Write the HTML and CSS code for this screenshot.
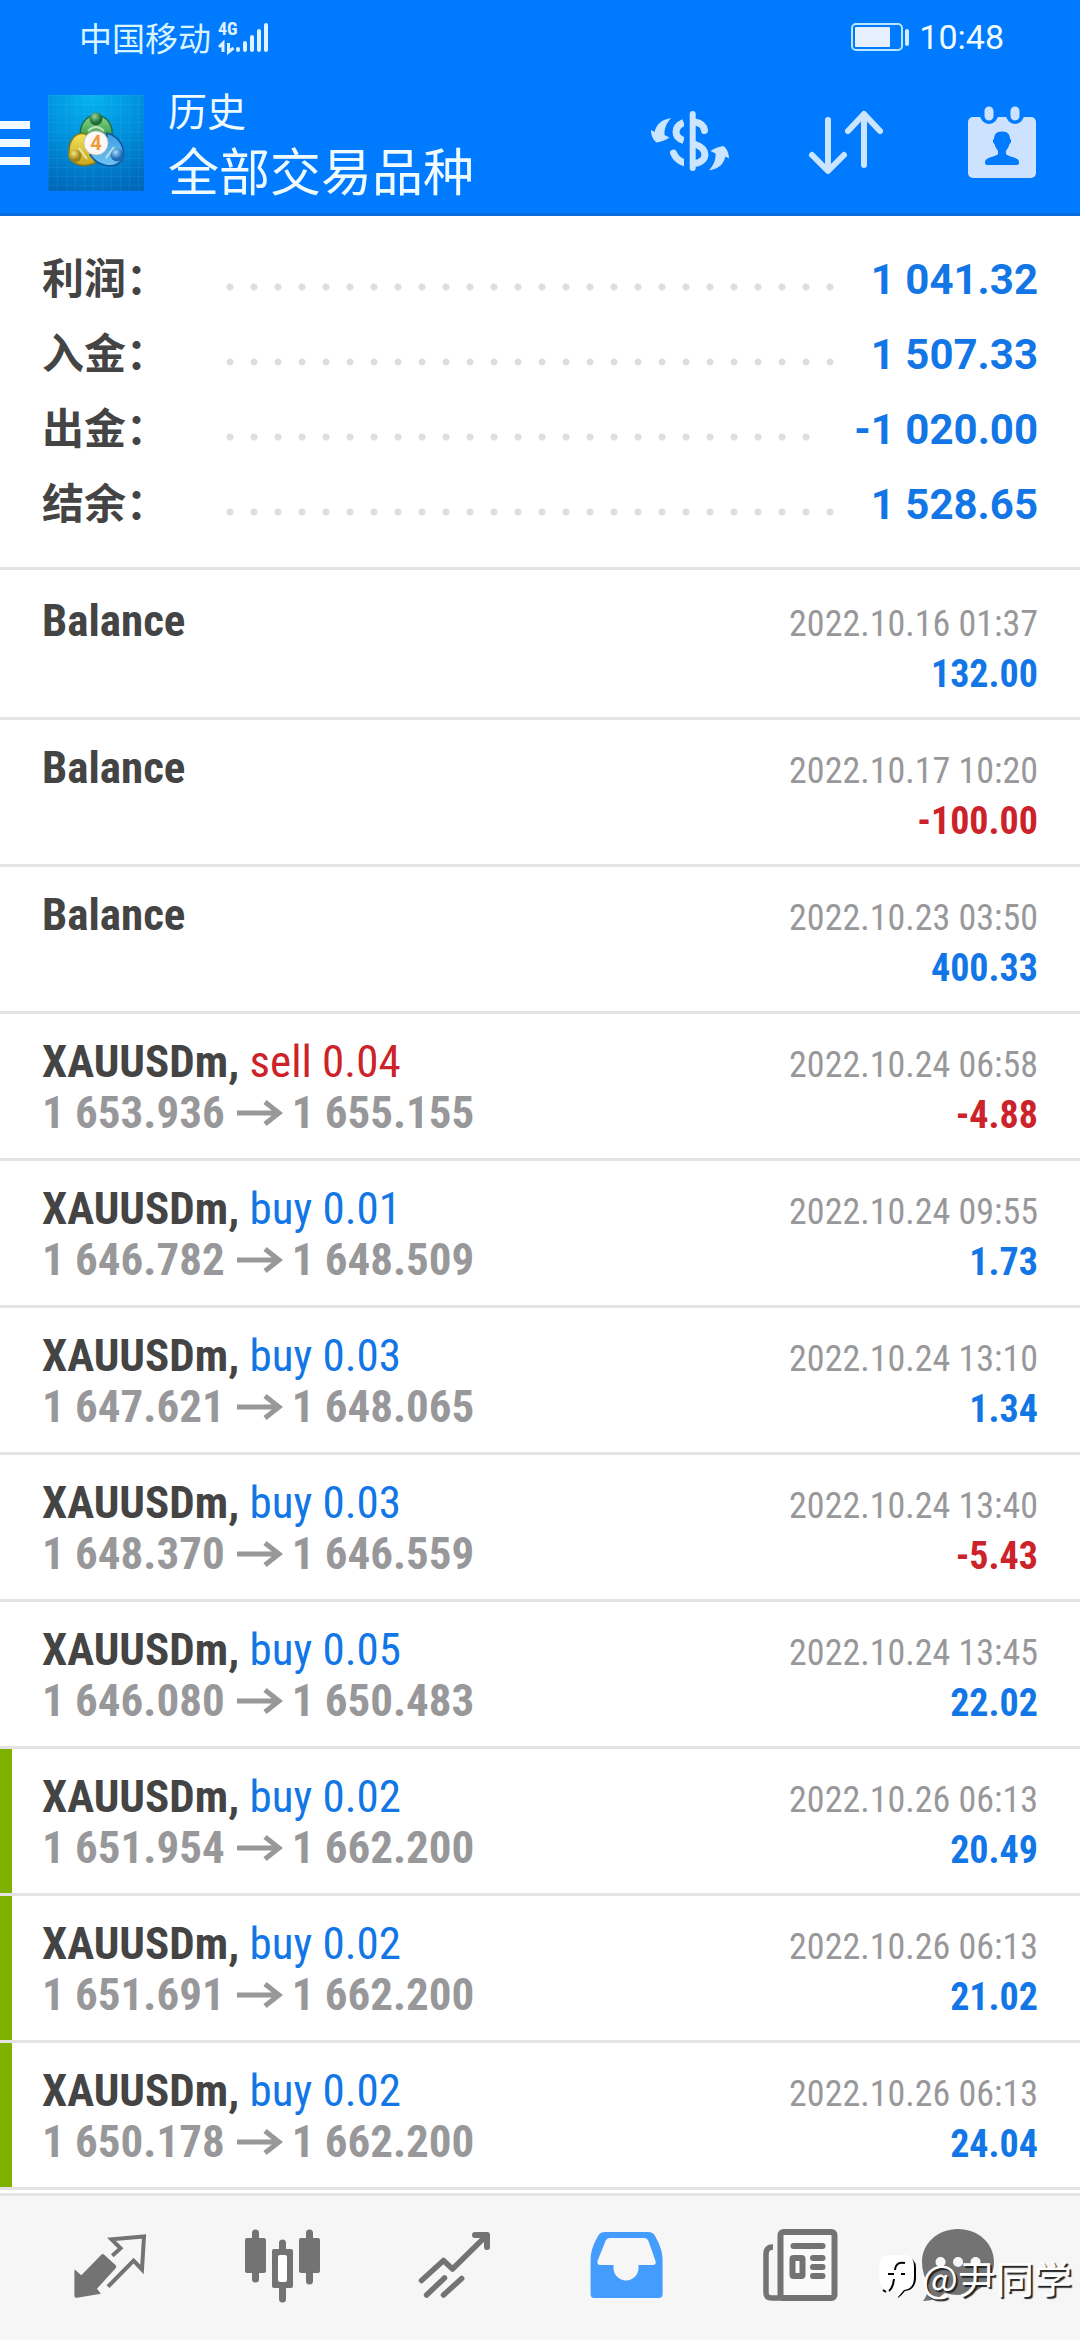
FILE: index.html
```html
<!DOCTYPE html>
<html lang="zh-CN">
<head>
<meta charset="utf-8">
<meta name="viewport" content="width=device-width, initial-scale=1">
<title>历史</title>
<link rel="stylesheet" href="styles.css">
</head>
<body>
<header class="header">
  <div class="status">
    <span class="carrier">中国移动</span>
    <svg class="signal" width="54" height="36" viewBox="0 0 54 36" aria-hidden="true">
      <text class="signal-type" x="1" y="16">4G</text>
      <path d="M2 28l4-4v9M11.500 24v9l5-4" fill="none" stroke="#e0f2ff" stroke-width="3"/>
      <path d="M21 30v1M28 24v7M35 18v13M42 12v19M49 6v25" stroke="#e0f2ff" stroke-width="4" stroke-linecap="round"/>
    </svg>
    <svg class="battery" width="60" height="28" viewBox="0 0 60 28" aria-hidden="true">
      <rect x="1" y="1" width="50" height="26" rx="4" fill="none" stroke="#b8e4ff" stroke-width="2"/>
      <rect x="4" y="4" width="35" height="20" rx="1" fill="#e6f0ff"/>
      <rect x="54" y="6" width="4" height="17" rx="2" fill="#d0eaff"/>
    </svg>
    <time class="clock">10:48</time>
  </div>
  <div class="toolbar">
    <button class="menu" type="button" aria-label="菜单"><span class="menu-line"></span><span class="menu-line"></span><span class="menu-line"></span></button>
    <svg class="logo" viewBox="0 0 96 96" aria-hidden="true">
      <defs>
        <radialGradient id="bg" cx=".45" cy="0" r="1.05"><stop offset="0" stop-color="#06b4f2"/><stop offset=".5" stop-color="#0090dc"/><stop offset="1" stop-color="#0067ba"/></radialGradient>
        <pattern id="grid" width="9" height="9" patternUnits="userSpaceOnUse"><path d="M0 0H9M0 0V9" stroke="#5cc4f4" stroke-opacity=".22"/></pattern>
        <linearGradient id="green" x2="0" y2="1"><stop offset="0" stop-color="#8fd98a"/><stop offset="1" stop-color="#1e8a3c"/></linearGradient>
        <linearGradient id="yellow" x2="0" y2="1"><stop offset="0" stop-color="#f0e45c"/><stop offset="1" stop-color="#c9a51c"/></linearGradient>
        <linearGradient id="blue" x2="0" y2="1"><stop offset="0" stop-color="#3c9fe0"/><stop offset="1" stop-color="#6fc2f4"/></linearGradient>
        <radialGradient id="gball" cx=".4" cy=".3"><stop offset="0" stop-color="#9ad49a"/><stop offset="1" stop-color="#1d6e36"/></radialGradient>
        <radialGradient id="yball" cx=".4" cy=".3"><stop offset="0" stop-color="#f4e87a"/><stop offset="1" stop-color="#9c8418"/></radialGradient>
        <radialGradient id="bball" cx=".4" cy=".3"><stop offset="0" stop-color="#a4dcff"/><stop offset="1" stop-color="#1c6cb4"/></radialGradient>
      </defs>
      <rect width="96" height="96" fill="url(#bg)"/>
      <rect width="96" height="96" fill="url(#grid)"/>
      <path d="M33 46C30 32 36 21 48 20C61 21 67 33 63 47Z" fill="url(#green)" stroke="#1a6f4c" stroke-width="1.500"/>
      <path d="M38 39C24 36 20 50 21 61C24 70 35 73 47 68L42 52Z" fill="url(#yellow)" stroke="#7e7a1c" stroke-width="1.500"/>
      <path d="M59 38C73 42 78 55 74 65C66 75 50 71 42 60L58 54Z" fill="url(#blue)" stroke="#11569c" stroke-width="1.500"/>
      <path d="M40 36q8-8 16 0M31 53l8 11M66 52l-8 11" fill="none" stroke="#eaf6dc" stroke-opacity=".7" stroke-width="2"/>
      <circle cx="48" cy="24" r="6.500" fill="url(#gball)"/>
      <circle cx="27" cy="61" r="6.500" fill="url(#yball)"/>
      <circle cx="69" cy="60" r="6.500" fill="url(#bball)"/>
      <circle cx="48" cy="48" r="12" fill="#fbf8f6" stroke="#c8c4c0"/>
      <text class="logo-digit" x="48" y="55" text-anchor="middle">4</text>
    </svg>
    <div class="titles">
      <div class="subtitle">历史</div>
      <h1 class="title">全部交易品种</h1>
    </div>
    <button class="tool" type="button" aria-label="交易品种">
      <svg width="156" height="144" viewBox="0 0 156 144" aria-hidden="true">
        <g fill="none" stroke="#cce5ff" stroke-width="7">
          <path d="M71.700 51.500C61.500 56 61.500 66 71.700 69.500"/>
          <path d="M61.500 82C63.500 87 67 90 71.700 91.500M83 51C89 52 92 55 92.500 59.500" stroke-linecap="round"/>
          <path d="M82 73C96.500 77 96.500 91 82 92.500"/>
        </g>
        <path d="M72 42h4v60h-4z" fill="#007aff"/>
        <path d="M80.700 43V97" stroke="#cce5ff" stroke-width="6" stroke-linecap="round"/>
        <path id="swap" d="M59 47C48 49 44.500 54 42.500 61L39 59C39 64 41 69 44.700 71.500C49 71 54 69 57.500 66.500L52.500 64C52 58 54.500 52 59 47Z" fill="#cce5ff"/>
        <use href="#swap" transform="rotate(180 78 73.300)"/>
      </svg>
    </button>
    <button class="tool" type="button" aria-label="排序">
      <svg width="156" height="144" viewBox="0 0 156 144" aria-hidden="true">
        <path d="M60 49V98M44 84L60 100L76 84M96 94V45M80 60L96 43L112 60" fill="none" stroke="#cce5ff" stroke-width="6" stroke-linecap="round" stroke-linejoin="round"/>
      </svg>
    </button>
    <button class="tool" type="button" aria-label="日期">
      <svg width="156" height="144" viewBox="0 0 156 144" aria-hidden="true">
        <rect x="44" y="46" width="68" height="61" rx="5" fill="#cce2ff"/>
        <path d="M65 40V44M91 40V44" stroke="#007aff" stroke-width="18" stroke-linecap="round"/>
        <path d="M65 40V45M91 40V45" stroke="#cce2ff" stroke-width="9" stroke-linecap="round"/>
        <path d="M78 60.500C84 60.500 86 64 86 68C88 69 87 72 85.500 73C85 76 83 78 82 80V83C84 86 95 86 95 91V92Q95 94 93 94H63Q61 94 61 92V91C61 86 72 86 74 83V80C73 78 71 76 70.500 73C69 72 68 69 70 68C70 64 72 60.500 78 60.500Z" fill="#007aff"/>
      </svg>
    </button>
  </div>
</header>

<main class="main">
  <dl class="summary">
    <div class="sum-row"><dt class="sum-label">利润：</dt><dd class="sum-value">1 041.32</dd></div>
    <div class="sum-row"><dt class="sum-label">入金：</dt><dd class="sum-value">1 507.33</dd></div>
    <div class="sum-row"><dt class="sum-label">出金：</dt><dd class="sum-value">-1 020.00</dd></div>
    <div class="sum-row"><dt class="sum-label">结余：</dt><dd class="sum-value">1 528.65</dd></div>
  </dl>

  <svg class="defs" width="0" height="0" aria-hidden="true"><symbol id="arrow" viewBox="0 0 46 26"><path d="M0 13H42M28 2L42 13L28 24" fill="none" stroke="#98989b" stroke-width="5"/></symbol></svg>

  <ul class="deals">
    <li class="deal"><span class="name">Balance</span><time class="date">2022.10.16 01:37</time><span class="profit">132.00</span></li>
    <li class="deal"><span class="name">Balance</span><time class="date">2022.10.17 10:20</time><span class="profit loss">-100.00</span></li>
    <li class="deal"><span class="name">Balance</span><time class="date">2022.10.23 03:50</time><span class="profit">400.33</span></li>
    <li class="deal"><span class="name">XAUUSDm, <span class="side sell">sell 0.04</span></span><time class="date">2022.10.24 06:58</time><span class="price">1 653.936<svg class="arrow"><use href="#arrow"/></svg>1 655.155</span><span class="profit loss">-4.88</span></li>
    <li class="deal"><span class="name">XAUUSDm, <span class="side">buy 0.01</span></span><time class="date">2022.10.24 09:55</time><span class="price">1 646.782<svg class="arrow"><use href="#arrow"/></svg>1 648.509</span><span class="profit">1.73</span></li>
    <li class="deal"><span class="name">XAUUSDm, <span class="side">buy 0.03</span></span><time class="date">2022.10.24 13:10</time><span class="price">1 647.621<svg class="arrow"><use href="#arrow"/></svg>1 648.065</span><span class="profit">1.34</span></li>
    <li class="deal"><span class="name">XAUUSDm, <span class="side">buy 0.03</span></span><time class="date">2022.10.24 13:40</time><span class="price">1 648.370<svg class="arrow"><use href="#arrow"/></svg>1 646.559</span><span class="profit loss">-5.43</span></li>
    <li class="deal"><span class="name">XAUUSDm, <span class="side">buy 0.05</span></span><time class="date">2022.10.24 13:45</time><span class="price">1 646.080<svg class="arrow"><use href="#arrow"/></svg>1 650.483</span><span class="profit">22.02</span></li>
    <li class="deal marked"><span class="name">XAUUSDm, <span class="side">buy 0.02</span></span><time class="date">2022.10.26 06:13</time><span class="price">1 651.954<svg class="arrow"><use href="#arrow"/></svg>1 662.200</span><span class="profit">20.49</span></li>
    <li class="deal marked"><span class="name">XAUUSDm, <span class="side">buy 0.02</span></span><time class="date">2022.10.26 06:13</time><span class="price">1 651.691<svg class="arrow"><use href="#arrow"/></svg>1 662.200</span><span class="profit">21.02</span></li>
    <li class="deal marked"><span class="name">XAUUSDm, <span class="side">buy 0.02</span></span><time class="date">2022.10.26 06:13</time><span class="price">1 650.178<svg class="arrow"><use href="#arrow"/></svg>1 662.200</span><span class="profit">24.04</span></li>
  </ul>
</main>

<nav class="tabs">
  <a class="tab" href="#quotes" aria-label="行情">
    <svg width="144" height="144" viewBox="0 0 144 144" aria-hidden="true">
      <path d="M37.400 74L43.300 79.300L63 59Q64.600 57 66.500 59L77.400 69Q79 70.700 77.400 72.500L59 92.700L62.900 97.700L39 101.700Q36.400 102 36.400 100V74Z" fill="#737373"/>
      <path d="M74.300 59.700L82.500 52.300L73.500 43.300L106 40.500L104 73.500L95.600 64.700L70 90.700" fill="none" stroke="#737373" stroke-width="4"/>
    </svg>
  </a>
  <a class="tab" href="#chart" aria-label="图表">
    <svg width="144" height="144" viewBox="0 0 144 144" aria-hidden="true">
      <path d="M44.500 37V83M98.500 37V85M71.500 47V103" stroke="#737373" stroke-width="7" stroke-linecap="round"/>
      <rect x="34" y="42" width="21" height="35" rx="2" fill="#737373"/>
      <rect x="88" y="42" width="21" height="35" rx="2" fill="#737373"/>
      <rect x="61" y="53" width="21" height="39" rx="2" fill="#737373"/>
      <rect x="67" y="59" width="9" height="27" rx="2" fill="#fff"/>
    </svg>
  </a>
  <a class="tab" href="#trade" aria-label="交易">
    <svg width="144" height="144" viewBox="0 0 144 144" aria-hidden="true">
      <g fill="none" stroke="#737373" stroke-linecap="round" stroke-linejoin="round">
        <path d="M38.500 84.500L60.500 64.500L69.500 73L102 41M61.500 82L43.600 99M78.700 82.500L60.500 99" stroke-width="5.500"/>
        <path d="M92 39H104V51" stroke-width="6"/>
      </g>
    </svg>
  </a>
  <a class="tab" href="#history" aria-label="历史" aria-current="page">
    <svg width="144" height="144" viewBox="0 0 144 144" aria-hidden="true">
      <path fill-rule="evenodd" fill="#449cff" d="M50 36H93Q98 36 100 40C104 47 107.600 55 107.600 64V98Q107.600 102 104 102H39Q35.600 102 35.600 98V64C35.600 55 39 47 43 40Q45 36 50 36ZM55 42Q52 42 50.500 45L42.500 65Q42 69 45 69H58.500V72A12.500 12.500 0 0 0 83.500 72V69H98Q101.500 69 100.500 65L93.500 45Q92 42 89 42Z"/>
    </svg>
  </a>
  <a class="tab" href="#news" aria-label="新闻">
    <svg width="144" height="144" viewBox="0 0 144 144" aria-hidden="true">
      <path d="M45 51Q38 51 38 58V97Q38 102 44 102H55" fill="none" stroke="#737373" stroke-width="5.500"/>
      <rect x="52.500" y="36" width="54" height="66" rx="3" fill="#fafafa" stroke="#737373" stroke-width="6"/>
      <path d="M65.500 50H94.500M85 62H94.500M85 71H94.500M85 80H94.500" stroke="#737373" stroke-width="6" stroke-linecap="round"/>
      <rect x="64.500" y="62" width="10" height="18" rx="1" fill="#fafafa" stroke="#737373" stroke-width="6"/>
    </svg>
  </a>
  <a class="tab tab-last" href="#messages" aria-label="消息">
    <svg width="144" height="144" viewBox="0 0 144 144" aria-hidden="true">
      <path d="M72 33C92 33 108 47 108 66S92 99 72 99Q65 99 59 97Q50 105 37 105Q42 99 43 89Q36 79 36 66C36 47 52 33 72 33Z" fill="#737373"/>
      <path d="M54.500 66h.1M72 66h.1M89.500 66h.1" stroke="#f7f7f7" stroke-width="10" stroke-linecap="round"/>
    </svg>
  </a>
  <div class="watermark">
    <svg width="40" height="46" viewBox="0 0 40 46" aria-hidden="true">
      <path d="M25 3H28Q38 4 38 14V25Q37 36 27 37Q24 41 20 44V38Z" fill="#000"/>
      <path d="M11 1H26Q36 1 36 13V23Q36 35 26 36L20 43L17 37Q1 39 1 23V13Q1 1 11 1Z" fill="#fff"/>
      <path d="M27 9Q18 7 17 16M10 20H16M23 20H27M16 25Q15 34 11 37M5 36L8 38" fill="none" stroke="#000" stroke-width="2"/>
    </svg>
    <span>@尹同学</span>
  </div>
</nav>
</body>
</html>
```
FILE: styles.css
```css
* {
  box-sizing: border-box;
}

body {
  margin: 0;
  min-height: 100vh;
  display: flex;
  flex-direction: column;
  background: #fff;
  color: #444;
  font-family: "Roboto Condensed", Roboto, "Noto Sans CJK SC", sans-serif;
}

button {
  border: 0;
  padding: 0;
  background: none;
}

svg {
  display: block;
}

.header {
  background: #007aff;
  border-bottom: 3px solid #0a6cdc;
  color: #f0fbff;
}

.status {
  display: flex;
  align-items: center;
  height: 72px;
  padding: 2px 76px 0 79px;
}

.carrier {
  font: 33px/70px "Noto Sans CJK SC", sans-serif;
  color: #d8f6ff;
}

.signal {
  margin-left: 6px;
}

.signal-type {
  font: 700 18px "Roboto Condensed", sans-serif;
  fill: #e0f2ff;
}

.battery {
  margin-left: auto;
}

.clock {
  margin-left: 8px;
  font: 34px/70px Roboto, sans-serif;
}

.toolbar {
  display: flex;
  align-items: center;
  height: 141px;
}

.menu {
  display: grid;
  gap: 10px;
  width: 30px;
  margin-right: 18px;
}

.menu-line {
  height: 8px;
  background: #f0fbff;
}

.logo {
  width: 96px;
  height: 96px;
}

.logo-digit {
  font: 700 20px Roboto, sans-serif;
  fill: #f09a3c;
}

.titles {
  flex: 1;
  margin-left: 24px;
  font-family: "Noto Sans CJK SC", sans-serif;
  white-space: nowrap;
}

.subtitle {
  font-size: 39px;
  line-height: 56px;
}

.title {
  margin: 0 0 3px;
  font-size: 51px;
  font-weight: 400;
  line-height: 64px;
}

.tool {
  width: 156px;
}

.main {
  flex: 1;
}

.summary {
  margin: 0;
  padding: 26px 42px 25px;
  border-bottom: 3px solid #e3e3e3;
}

.sum-row {
  display: flex;
  align-items: center;
  font: 700 42px/75px Roboto, "Noto Sans CJK SC", sans-serif;
}

.sum-label {
  width: 176px;
}

.sum-value {
  display: flex;
  flex: 1;
  margin: 0;
  color: #1276e6;
}

.sum-value::before {
  content: "";
  flex: 1;
  margin-right: 30px;
  background: radial-gradient(circle at 12px 45px, #dedede 3px, transparent 4px) 0 0 / 24px 100%;
}

.defs {
  position: absolute;
}

.deals {
  margin: 0;
  padding: 3px 0;
  list-style: none;
}

.deal {
  display: grid;
  grid-template-columns: 1fr auto;
  grid-template-rows: 51px 51px;
  align-items: baseline;
  height: 147px;
  padding: 22px 42px 0;
  border-bottom: 3px solid #e3e3e3;
  font-size: 45px;
  line-height: 51px;
}

.marked {
  background: linear-gradient(#80b000, #80b000) 0 0 / 12px 100% no-repeat padding-box;
}

.name,
.price {
  grid-column: 1;
  font-weight: 700;
}

.side {
  color: #1276e6;
  font-weight: 400;
}

.sell {
  color: #cc2229;
}

.price {
  display: flex;
  align-items: center;
  color: #98989b;
}

.arrow {
  width: 46px;
  height: 26px;
  margin: 0 9px 0 12px;
}

.date,
.profit {
  grid-column: 2;
  text-align: right;
}

.date {
  color: #98989b;
  font-size: 36px;
}

.profit {
  color: #1276e6;
  font-size: 38px;
  font-weight: 700;
  line-height: 56px;
}

.loss {
  color: #cc2229;
}

.tabs {
  position: relative;
  display: flex;
  height: 147px;
  padding: 0 50px 0 24px;
  border-top: 3px solid #e3e3e3;
  background: #f6f6f6;
}

.tab {
  display: flex;
  flex: 172;
  justify-content: center;
}

.tab-last {
  flex: 144;
}

.watermark {
  position: absolute;
  right: 8px;
  bottom: 38px;
  display: flex;
  align-items: center;
  gap: 4px;
  color: #fff;
  font: 38px/50px "Noto Sans CJK SC", sans-serif;
  text-shadow: 2px 2px 1px #222;
}
```
